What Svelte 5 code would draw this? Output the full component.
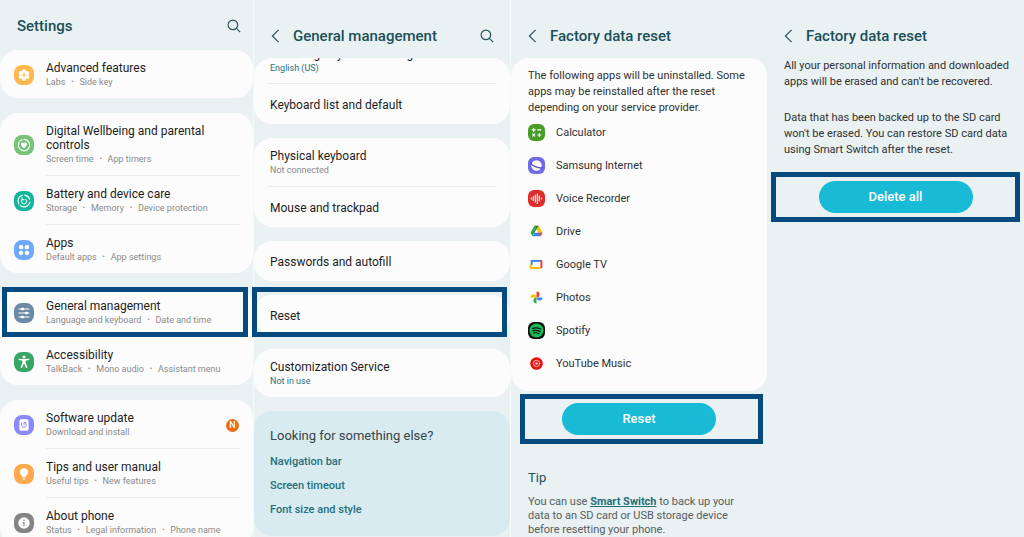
<script lang="ts">
	interface Row {
		title: string;
		parts?: string[];
		icon?: string;
		color?: string;
		accent?: boolean;
		badge?: string;
		clipped?: boolean;
		marked?: boolean;
	}

	const settings: Row[][] = [
		[{ title: 'Advanced features', parts: ['Labs', 'Side key'], icon: 'gear', color: '#fdb94e' }],
		[
			{ title: 'Digital Wellbeing and parental controls', parts: ['Screen time', 'App timers'], icon: 'wellbeing', color: '#74c476' },
			{ title: 'Battery and device care', parts: ['Storage', 'Memory', 'Device protection'], icon: 'care', color: '#12b59b' },
			{ title: 'Apps', parts: ['Default apps', 'App settings'], icon: 'apps', color: '#70a8fb' }
		],
		[
			{ title: 'General management', parts: ['Language and keyboard', 'Date and time'], icon: 'sliders', color: '#6a89a5', marked: true },
			{ title: 'Accessibility', parts: ['TalkBack', 'Mono audio', 'Assistant menu'], icon: 'person', color: '#36a662' }
		],
		[
			{ title: 'Software update', parts: ['Download and install'], icon: 'update', color: '#8a8afc', badge: 'N' },
			{ title: 'Tips and user manual', parts: ['Useful tips', 'New features'], icon: 'bulb', color: '#fea94f' },
			{ title: 'About phone', parts: ['Status', 'Legal information', 'Phone name'], icon: 'info', color: '#848484' }
		]
	];

	const general: Row[][] = [
		[{ title: 'Samsung Keyboard settings', parts: ['English (US)'], accent: true, clipped: true }, { title: 'Keyboard list and default' }],
		[{ title: 'Physical keyboard', parts: ['Not connected'] }, { title: 'Mouse and trackpad' }],
		[{ title: 'Passwords and autofill' }],
		[{ title: 'Reset', marked: true }],
		[{ title: 'Customization Service', parts: ['Not in use'], accent: true }]
	];

	const related = ['Navigation bar', 'Screen timeout', 'Font size and style'];

	const apps = ['Calculator', 'Samsung Internet', 'Voice Recorder', 'Drive', 'Google TV', 'Photos', 'Spotify', 'YouTube Music'];
</script>

{#snippet backButton()}
	<button class="icon-button back" aria-label="Back">
		<svg width="9" height="14" viewBox="0 0 9 14" fill="none" stroke="#2c5560" stroke-width="1.2">
			<path d="M7.6 .8 1.4 7l6.2 6.200" />
		</svg>
	</button>
{/snippet}

{#snippet searchButton()}
	<button class="icon-button search" aria-label="Search">
		<svg width="14" height="14" viewBox="0 0 14 14" fill="none" stroke="#2c5560" stroke-width="1.2">
			<circle cx="5.9" cy="5.9" r="4.8" />
			<path d="m9.4 9.4 3.8 3.8" />
		</svg>
	</button>
{/snippet}

{#snippet settingIcon(name: string, color: string)}
	<svg class="setting-icon" width="20" height="20" viewBox="0 0 20 20" fill="none" stroke="#fff" stroke-linecap="round">
		<rect width="20" height="20" rx="8" fill={color} stroke="none" />
		{#if name === 'gear'}
			<g fill="#fff" stroke="none">
				<circle cx="10" cy="10" r="4.2" />
				{#each [0, 60, 120, 180, 240, 300] as angle}
					<rect x="8.3" y="4.3" width="3.4" height="4" rx="1.3" transform="rotate({angle} 10 10)" />
				{/each}
			</g>
			<path d="M10 8.1v3.8M8.1 10h3.8" stroke={color} stroke-width="1.1" />
		{:else if name === 'wellbeing'}
			<path d="M10 4.3a5.7 5.7 0 1 1-4.9 2.8" stroke-width="1.2" />
			<path d="M6.2 5.7 8 4.7" stroke-width="1.2" />
			<path d="M10 13.2C5.8 10.5 6.8 7.5 8.6 7.5q.9 0 1.4.9.5-.9 1.4-.9c1.8 0 2.8 3-1.4 5.7Z" fill="#fff" stroke="none" />
		{:else if name === 'care'}
			<path d="M10.8 4.1a6 6 0 0 1 4.8 4M15.9 11a6 6 0 0 1-9.5 3.7M4.8 13a6 6 0 0 1 3.4-8.7" stroke-width="1.2" />
			<path d="M8.3 8.2a2.7 2.7 0 1 0 3.5 0M8.1 6.8v2h2" stroke-width="1" />
		{:else if name === 'apps'}
			<g fill="#fff" stroke="none">
				<rect x="5" y="5" width="4.3" height="4.3" rx="1.8" />
				<rect x="10.7" y="5" width="4.3" height="4.3" rx="1.8" />
				<rect x="5" y="10.7" width="4.3" height="4.3" rx="1.8" />
				<rect x="10.7" y="10.7" width="4.3" height="4.3" rx="1.8" />
			</g>
		{:else if name === 'sliders'}
			<path d="M5 6h10M5 10h10M5 14h10" stroke-width="1" />
			<path d="M8 6h1M12 10h1M8 14h1" stroke-width="2.6" />
		{:else if name === 'person'}
			<circle cx="10" cy="4.9" r="1.5" fill="#fff" stroke="none" />
			<path d="M5.3 7.6 10 8.1l4.7-.5" stroke-width="1.5" />
			<path d="M9.1 8.5v2.6l-1.6 4M10.9 8.5v2.6l1.6 4M10 8.5v3" stroke-width="1.6" />
		{:else if name === 'update'}
			<rect x="5.4" y="4.3" width="9.2" height="11.4" rx="1.6" fill="#fff" stroke="none" />
			<path d="M7.6 8v2.200a2.400 2.400 0 1 0 4.200-1.800M11.800 7.600H10v2.200" stroke={color} stroke-width="1" />
		{:else if name === 'bulb'}
			<path d="M10 4.2a4 4 0 0 0-2.2 7.4l.4 1.6h3.6l.4-1.6A4 4 0 0 0 10 4.2Z" fill="#fff" stroke="none" />
			<path d="M9 15h2" stroke-width="1.2" />
		{:else if name === 'info'}
			<circle cx="10" cy="10" r="5.7" fill="#fff" stroke="none" />
			<path d="M10 9.6v3.2M9.2 9.6h.8" stroke={color} stroke-width="1.1" />
			<circle cx="10" cy="7.3" r=".8" fill={color} stroke="none" />
		{/if}
	</svg>
{/snippet}

{#snippet appIcon(name: string)}
	<svg width="17" height="17" viewBox="0 0 17 17" fill="none" stroke-linecap="round">
		{#if name === 'Calculator'}
			<rect width="17" height="17" rx="6" fill="#479c26" />
			<path d="M4.2 5.9h3M5.7 4.4v3M9.8 5.9h3M4.6 9.9l2.2 2.2M6.8 9.9l-2.2 2.2M9.8 11h3M11.3 9.5v3" stroke="#fff" stroke-width="1.1" />
		{:else if name === 'Samsung Internet'}
			<rect width="17" height="17" rx="6" fill="#6f6be8" />
			<circle cx="8.5" cy="8.5" r="5.2" fill="#fff" />
			<path d="M2.8 5c-.6 2 2.200 3.800 5.200 4.900 3 1.100 6 1.300 6.600.3" stroke="#5750cf" stroke-width="1.4" />
		{:else if name === 'Voice Recorder'}
			<rect width="17" height="17" rx="6" fill="#da2f2b" />
			<path d="M3.3 8v1M5.3 6.500v4M7.300 5v7M9.300 4v9.500M11.300 6v5M13.500 8v1" stroke="#fff" stroke-width="1.1" />
		{:else if name === 'Drive'}
			<path d="M6.5 2.700 2.600 9.700l1.900 3.500 4-7Z" fill="#2ca450" />
			<path d="M6.500 2.700h4l4 7h-4Z" fill="#fbbc05" />
			<path d="M6.500 2.700h4l-2 3.500Z" fill="#188038" />
			<path d="M6.500 9.700h8l-2 3.500h-8Z" fill="#4285f4" />
			<path d="M10.500 9.700h4l-2 3.500Z" fill="#ea4335" />
		{:else if name === 'Google TV'}
			<g stroke-width="2">
				<path d="M3.700 9V5" stroke="#34a853" stroke-linecap="butt" />
				<path d="M2.700 4.900h10.900" stroke="#4285f4" stroke-linecap="butt" />
				<path d="M13.400 4.400v7.700" stroke="#ea4335" stroke-linecap="butt" />
				<path d="M12.400 12.100H2.700V8.500" stroke="#fbbc05" stroke-linecap="butt" />
			</g>
		{:else if name === 'Photos'}
			<path d="M8.5 8.500V2.400a3.050 3.050 0 0 1 0 6.100Z" fill="#ea4335" />
			<path d="M8.500 8.500h6.100a3.050 3.050 0 0 1-6.100 0Z" fill="#4285f4" />
			<path d="M8.500 8.500v6.100a3.050 3.050 0 0 1 0-6.100Z" fill="#34a853" />
			<path d="M8.500 8.500H2.400a3.050 3.050 0 0 1 6.100 0Z" fill="#fbbc05" />
		{:else if name === 'Spotify'}
			<rect width="17" height="17" rx="6" fill="#111" />
			<circle cx="8.5" cy="8.5" r="7" fill="#1db954" />
			<path d="M4.500 6.300q4.400-1.200 8.200.7M4.900 8.700q3.700-1 7 .7M5.300 11q3-.7 5.700.7" stroke="#111" stroke-width="1.2" />
		{:else}
			<circle cx="8.5" cy="8.5" r="6.3" fill="#e8100f" />
			<circle cx="8.5" cy="8.5" r="3.2" stroke="#fff" stroke-width=".7" />
			<path d="M7.600 6.900v3.200l2.600-1.600Z" fill="#fff" />
		{/if}
	</svg>
{/snippet}

{#snippet cardRow(row: Row)}
	<a class="row" class:marked={row.marked} class:clipped={row.clipped} class:single={!row.parts} href="#settings">
		{#if row.icon}
			{@render settingIcon(row.icon, row.color ?? '#888')}
		{/if}
		<span class="row-text">
			<span class="row-title">{row.title}</span>
			{#if row.parts}
				<span class="row-sub" class:accent={row.accent}>
					{#each row.parts as part, i}
						{#if i > 0}<span class="dot">•</span>{/if}<span>{part}</span>
					{/each}
				</span>
			{/if}
		</span>
		{#if row.badge}
			<span class="badge">{row.badge}</span>
		{/if}
	</a>
{/snippet}

<main class="screens">
	<section class="screen settings">
		<header>
			<h1>Settings</h1>
			{@render searchButton()}
		</header>
		{#each settings as group}
			<div class="card">
				{#each group as row}
					{@render cardRow(row)}
				{/each}
			</div>
		{/each}
	</section>

	<section class="screen general">
		<header>
			{@render backButton()}
			<h1>General management</h1>
			{@render searchButton()}
		</header>
		{#each general as group}
			<div class="card">
				{#each group as row}
					{@render cardRow(row)}
				{/each}
			</div>
		{/each}
		<div class="related">
			<h2>Looking for something else?</h2>
			{#each related as link}
				<a href="#related">{link}</a>
			{/each}
		</div>
	</section>

	<section class="screen reset">
		<header>
			{@render backButton()}
			<h1>Factory data reset</h1>
		</header>
		<div class="card app-card">
			<p>The following apps will be uninstalled. Some apps may be reinstalled after the reset depending on your service provider.</p>
			<ul>
				{#each apps as app}
					<li>{@render appIcon(app)}{app}</li>
				{/each}
			</ul>
		</div>
		<div class="action">
			<button class="primary">Reset</button>
		</div>
		<div class="tip">
			<h2>Tip</h2>
			<p>You can use <a href="#smart-switch">Smart Switch</a> to back up your data to an SD card or USB storage device before resetting your phone.</p>
		</div>
	</section>

	<section class="screen confirm">
		<header>
			{@render backButton()}
			<h1>Factory data reset</h1>
		</header>
		<div class="warning">
			<p>All your personal information and downloaded apps will be erased and can't be recovered.</p>
			<p>Data that has been backed up to the SD card won't be erased. You can restore SD card data using Smart Switch after the reset.</p>
		</div>
		<div class="action">
			<button class="primary">Delete all</button>
		</div>
	</section>
</main>

<style>
	:global(body) {
		margin: 0;
		background: #e9f1f3;
	}

	.screens {
		display: grid;
		grid-template-columns: 253fr 257fr 257fr 257fr;
		height: 100vh;
		overflow: hidden;
		background: #e9f1f3;
		font-family: Roboto, 'Liberation Sans', sans-serif;
		color: #1c1c1c;
	}

	.screen {
		min-width: 0;
		box-sizing: border-box;
	}

	.general,
	.reset {
		border-left: 1px solid #f5f9fa;
	}

	header {
		display: flex;
		align-items: center;
		box-sizing: border-box;
		height: 58px;
		padding: 14px 16px 0 17px;
	}

	.settings header {
		height: 50px;
		padding: 1px 12px 0 17px;
	}

	h1 {
		flex: 1;
		margin: 0;
		font-size: 15px;
		font-weight: 500;
		line-height: 20px;
		color: #1c4f57;
	}

	h2,
	p,
	ul {
		margin: 0;
		padding: 0;
	}

	.icon-button {
		display: flex;
		padding: 0;
		border: none;
		background: none;
		cursor: pointer;
	}

	.back {
		margin-right: 13px;
	}

	.card {
		border-radius: 18px;
		background: #fcfcfc;
	}

	.card + .card {
		margin-top: 15px;
	}

	.row {
		position: relative;
		display: flex;
		align-items: center;
		box-sizing: border-box;
		min-height: 48px;
		padding: 11px 14px 9px;
		color: inherit;
		text-decoration: none;
	}

	.row + .row {
		margin-top: 1px;
	}

	.row + .row::before {
		content: '';
		position: absolute;
		top: -1px;
		left: 46px;
		right: 13px;
		height: 1px;
		background: #ececec;
	}

	.setting-icon {
		flex: none;
		margin-right: 12px;
	}

	.row-text {
		flex: 1;
		min-width: 0;
	}

	.row-title {
		display: block;
		font-size: 12px;
		line-height: 14px;
	}

	.row-sub {
		display: flex;
		align-items: center;
		font-size: 9px;
		line-height: 14px;
		color: #8b8b8b;
		white-space: nowrap;
	}

	.accent {
		color: #2a6f7b;
	}

	.dot {
		width: 14px;
		font-size: 7px;
		text-align: center;
	}

	.badge {
		width: 13px;
		height: 13px;
		border-radius: 50%;
		background: #ee6a11;
		color: #fff;
		font-size: 9px;
		font-weight: 500;
		line-height: 13px;
		text-align: center;
	}

	.marked::after {
		content: '';
		position: absolute;
		inset: -1px 5px -1px 2px;
		z-index: 1;
		border: 5px solid #044a7f;
	}

	.general .marked::after {
		inset: -8px 3px -2px -2px;
	}

	.general .card {
		overflow: hidden;
	}

	.general .card:has(.marked) {
		overflow: visible;
	}

	.general .card + .card {
		margin-top: 14px;
	}

	.general .row {
		padding: 11px 16px 9px;
	}

	.general .row + .row::before {
		left: 14px;
	}

	.general .single {
		min-height: 40px;
	}

	.general .clipped {
		align-items: flex-end;
		height: 25px;
		min-height: 0;
		padding: 0 16px 8px;
	}

	.related {
		display: flex;
		flex-direction: column;
		align-items: flex-start;
		gap: 10px;
		margin-top: 14px;
		padding: 16px 16px 19px;
		border-radius: 18px;
		background: #d7ebf0;
	}

	.related h2 {
		font-size: 13px;
		font-weight: 400;
		line-height: 18px;
		color: #38454a;
	}

	.related a {
		font-size: 11px;
		font-weight: 500;
		line-height: 14px;
		color: #25707a;
		text-decoration: none;
	}

	.app-card {
		padding: 10px 16px 11px 17px;
	}

	.app-card p,
	.warning p {
		font-size: 11px;
		line-height: 16px;
		color: #303030;
	}

	ul {
		list-style: none;
	}

	li {
		display: flex;
		align-items: center;
		gap: 11px;
		height: 33px;
		font-size: 11px;
		color: #303030;
	}

	.action {
		display: flex;
		justify-content: center;
		margin: 3px 4px 0 9px;
		padding: 4px 5px 4px 0;
		border: 5px solid #044a7f;
	}

	.primary {
		width: 154px;
		height: 32px;
		border: none;
		border-radius: 16px;
		background: #18bad6;
		color: #fff;
		font: 500 13px/20px Roboto, 'Liberation Sans', sans-serif;
		cursor: pointer;
	}

	.tip {
		padding: 25px 16px 0 17px;
	}

	.tip h2 {
		font-size: 13px;
		font-weight: 400;
		line-height: 18px;
		color: #1c4f57;
	}

	.tip p {
		margin-top: 8px;
		font-size: 11px;
		line-height: 14px;
		color: #555d60;
	}

	.tip a {
		font-weight: 700;
		color: #25707a;
	}

	.warning {
		padding: 0 14px 0 17px;
	}

	.warning p + p {
		margin-top: 20px;
	}

	.confirm .action {
		margin: 14px 4px 0;
		padding: 4px 0;
	}
</style>
